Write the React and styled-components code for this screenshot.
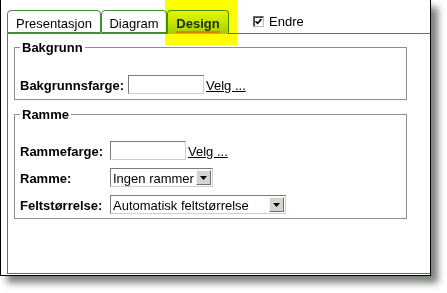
import React from "react";
import styled, { createGlobalStyle } from "styled-components";

const GlobalStyle = createGlobalStyle`
  body {
    margin: 0;
    background: #ffffff;
    font-family: "Liberation Sans", Arial, sans-serif;
    font-size: 13px;
    color: #000;
  }
`;

const green = "#3f8f33";

const Page = styled.div`
  width: 447px;
  height: 293px;
  overflow: hidden;
`;

const Window = styled.div`
  position: relative;
  box-sizing: border-box;
  width: 431px;
  height: 276px;
  background: #fff;
  border-left: 1px solid #000;
  border-right: 1px solid #000;
  border-bottom: 1px solid #000;
  padding: 10px 0 1px 6px;
  display: flex;
  flex-direction: column;
  box-shadow: 7px 7px 7px rgba(0, 0, 0, 0.5);
`;

const TabStrip = styled.div`
  display: flex;
  align-items: flex-end;
  height: 24px;
  box-sizing: border-box;
  border-bottom: 1px solid ${green};
`;

const Tab = styled.div`
  box-sizing: border-box;
  height: ${(p) => (p.$active ? "24px" : "23px")};
  margin-bottom: ${(p) => (p.$active ? "-1px" : "0")};
  width: ${(p) => p.$width}px;
  border: 1px solid ${green};
  border-bottom: ${(p) => (p.$active ? "none" : `1px solid ${green}`)};
  border-radius: 4px 4px 0 0;
  background: ${(p) =>
    p.$active ? "linear-gradient(#e6f6c4, #c0df8c 60%, #a4cc70)" : "#fff"};
  display: flex;
  justify-content: center;
  align-items: flex-start;
  padding-top: 6px;
  font-size: 13px;
  font-weight: ${(p) => (p.$active ? "bold" : "normal")};
  color: ${(p) => (p.$active ? "#16300e" : "#000")};
`;

const TabLabel = styled.span`
  line-height: 14px;
  border-bottom: ${(p) => (p.$active ? "2px solid #e0841c" : "none")};
`;

const Highlight = styled.div`
  position: absolute;
  left: 164px;
  top: 0;
  width: 72px;
  height: 45px;
  background: #ffff00;
  mix-blend-mode: multiply;
  pointer-events: none;
`;

const CheckWrap = styled.label`
  display: flex;
  align-items: center;
  gap: 5px;
  margin-left: 24px;
  margin-bottom: 4px;
  font-size: 13px;
`;

const CheckBox = styled.span`
  box-sizing: border-box;
  width: 11px;
  height: 11px;
  border-top: 1px solid #6a6a6a;
  border-left: 1px solid #6a6a6a;
  border-right: 1px solid #b8b8b8;
  border-bottom: 1px solid #b8b8b8;
  box-shadow: inset 1px 1px 0 #404040;
  background: #fff;
  display: flex;
  align-items: center;
  justify-content: center;
`;

const Body = styled.div`
  flex: 1;
  border-left: 1px solid ${green};
  border-bottom: 1px solid ${green};
  padding: 0 23px 0 6px;
`;

const Group = styled.fieldset`
  margin: ${(p) => p.$top}px 0 0 0;
  border: 1px solid #8e8e8e;
  padding: ${(p) => p.$pad};
  min-width: 0;
`;

const Legend = styled.legend`
  font-weight: bold;
  font-size: 13px;
  line-height: 15px;
  padding: 0 2px;
`;

const Rows = styled.div`
  display: flex;
  flex-direction: column;
  gap: 8px;
`;

const Row = styled.div`
  display: flex;
  align-items: center;
  height: 19px;
`;

const Label = styled.span`
  width: ${(p) => p.$width}px;
  font-weight: bold;
  font-size: 13px;
  padding-top: 1px;
`;

const TextBox = styled.div`
  box-sizing: border-box;
  width: 76px;
  height: 19px;
  background: #fff;
  border-top: 1px solid #7a7a7a;
  border-left: 1px solid #7a7a7a;
  border-right: 1px solid #cfcfcf;
  border-bottom: 1px solid #cfcfcf;
`;

const Link = styled.a`
  margin-left: 2px;
  padding-top: 1px;
  color: #000;
  text-decoration: underline;
  font-size: 13px;
  cursor: pointer;
`;

const Select = styled.div`
  box-sizing: border-box;
  width: ${(p) => p.$width}px;
  height: 19px;
  display: flex;
  align-items: center;
  background: #fff;
  border-top: 1px solid #7a7a7a;
  border-left: 1px solid #7a7a7a;
  border-right: 1px solid #cfcfcf;
  border-bottom: 1px solid #cfcfcf;
  padding: 0 1px 0 2px;
`;

const SelectValue = styled.span`
  flex: 1;
  font-size: 13px;
  white-space: nowrap;
  padding-top: 1px;
`;

const ArrowButton = styled.span`
  box-sizing: border-box;
  width: 15px;
  height: 15px;
  background: #d6d3ce;
  border-top: 1px solid #f4f4f4;
  border-left: 1px solid #f4f4f4;
  border-right: 1px solid #6e6e6e;
  border-bottom: 1px solid #6e6e6e;
  display: flex;
  align-items: center;
  justify-content: center;
`;

const Arrow = () => (
  <svg width="7" height="4" viewBox="0 0 7 4">
    <path d="M0 0h7L3.5 4z" fill="#000" />
  </svg>
);

const Dropdown = ({ width, value }) => (
  <Select $width={width}>
    <SelectValue>{value}</SelectValue>
    <ArrowButton>
      <Arrow />
    </ArrowButton>
  </Select>
);

const App = () => {
  return (
    <Page>
      <GlobalStyle />
      <Window>
        <TabStrip>
          <Tab $width={94}>
            <TabLabel>Presentasjon</TabLabel>
          </Tab>
          <Tab $width={66}>
            <TabLabel>Diagram</TabLabel>
          </Tab>
          <Tab $width={62} $active>
            <TabLabel $active>Design</TabLabel>
          </Tab>
          <CheckWrap>
            <CheckBox>
              <svg width="7" height="7" viewBox="0 0 7 7">
                <path d="M0.5 3.2L2.6 5.4L6.5 1" stroke="#000" strokeWidth="1.6" fill="none" />
              </svg>
            </CheckBox>
            Endre
          </CheckWrap>
        </TabStrip>
        <Body>
          <Group $top={6} $pad="20px 5px 5px 5px">
            <Legend>Bakgrunn</Legend>
            <Row>
              <Label $width={108}>Bakgrunnsfarge:</Label>
              <TextBox />
              <Link>Velg ...</Link>
            </Row>
          </Group>
          <Group $top={7} $pad="19px 5px 4px 5px">
            <Legend>Ramme</Legend>
            <Rows>
              <Row>
                <Label $width={90}>Rammefarge:</Label>
                <TextBox />
                <Link>Velg ...</Link>
              </Row>
              <Row>
                <Label $width={90}>Ramme:</Label>
                <Dropdown width={103} value="Ingen rammer" />
              </Row>
              <Row>
                <Label $width={90}>Feltstørrelse:</Label>
                <Dropdown width={176} value="Automatisk feltstørrelse" />
              </Row>
            </Rows>
          </Group>
        </Body>
        <Highlight />
      </Window>
    </Page>
  );
};

export default App;
